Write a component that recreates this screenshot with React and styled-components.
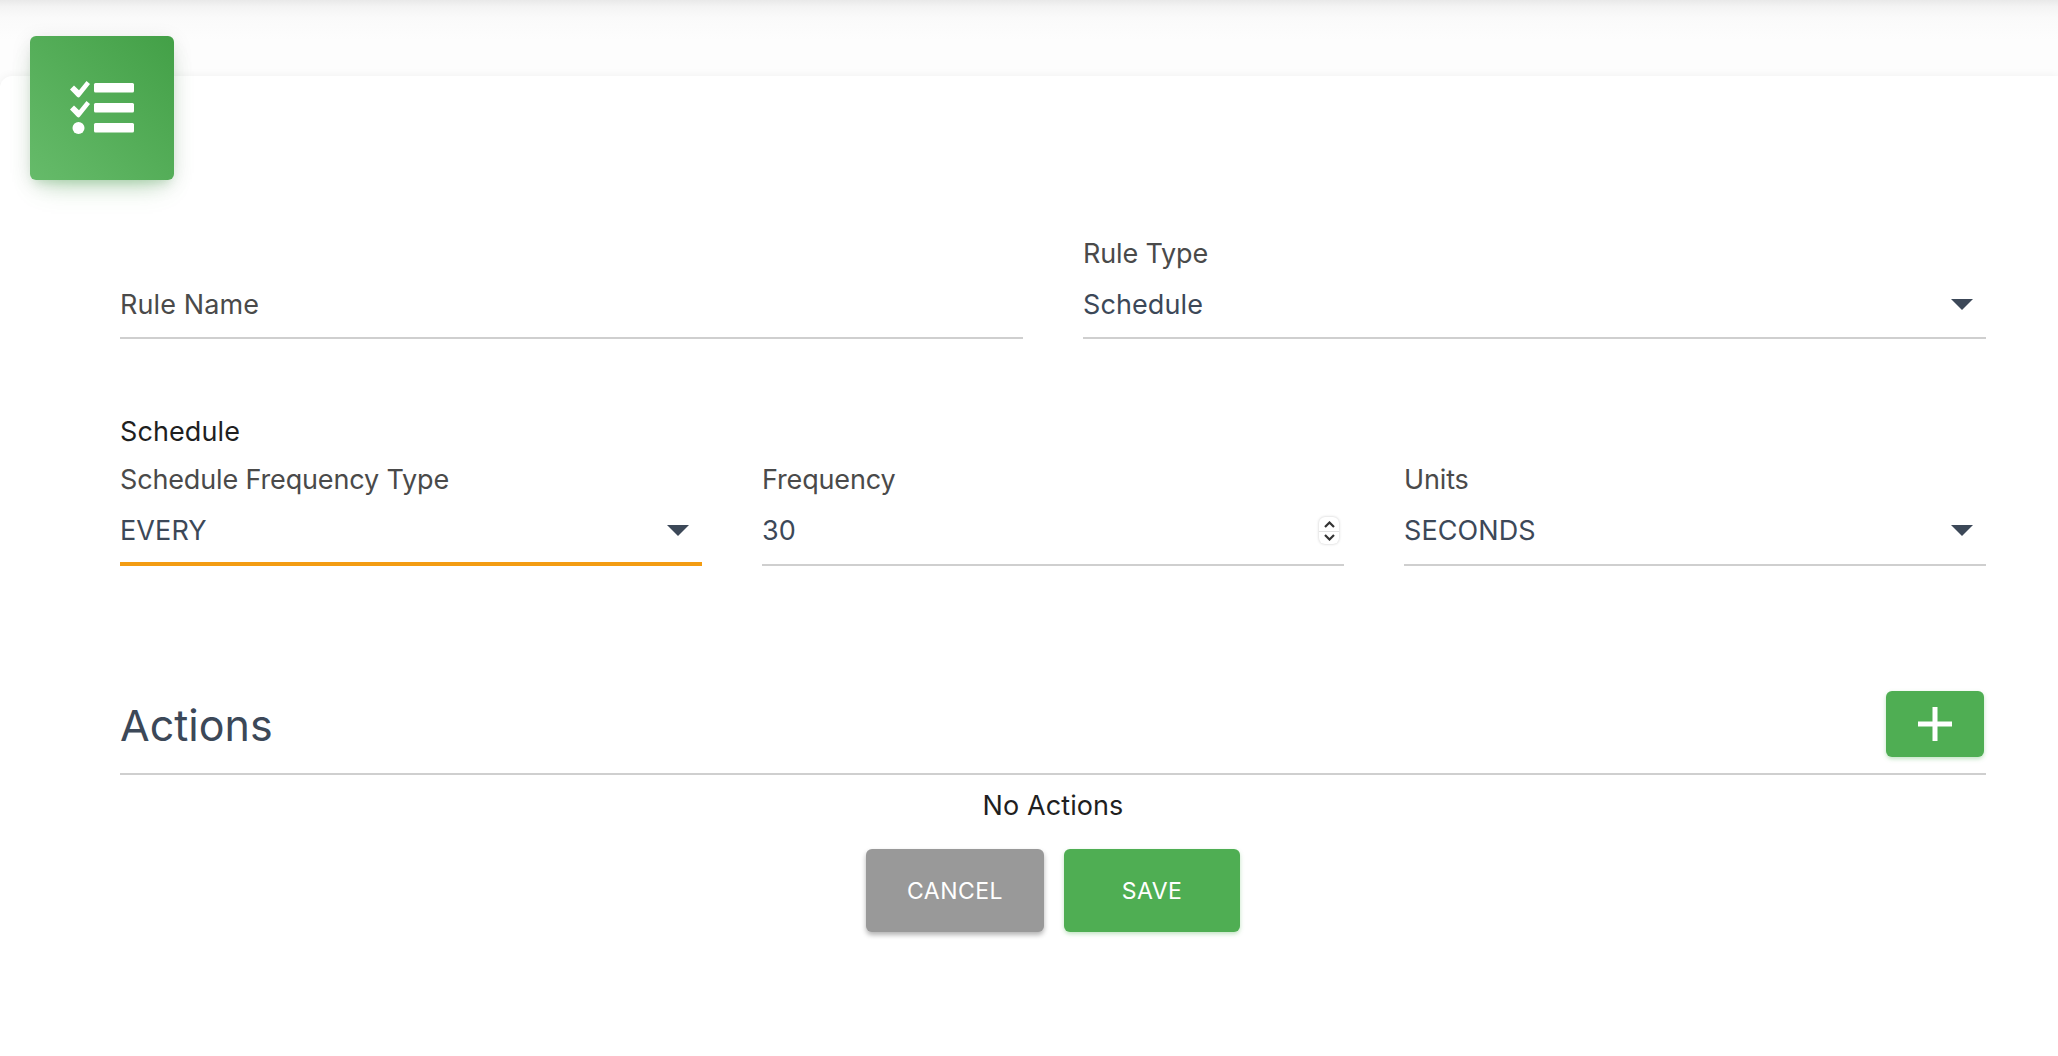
import React from "react";
import styled, { createGlobalStyle } from "styled-components";

const Global = createGlobalStyle`
  html, body { margin: 0; padding: 0; background: #fefefe; }
  body { font-family: Inter, "Liberation Sans", sans-serif; overflow: hidden; }
  * { box-sizing: border-box; }
`;

const Page = styled.div`
  height: 1056px;
  display: flex;
  flex-direction: column;
  overflow: hidden;
  background: #fdfdfd;
`;
const TopShade = styled.div`
  height: 76px;
  flex: none;
  background: linear-gradient(#e9e9e9 0, #f4f4f4 7px, #fafafa 18px, #fdfdfd 40px);
`;
const Card = styled.main`
  position: relative;
  flex: 1;
  background: #fff;
  border-top-left-radius: 12px;
  box-shadow: 0 0 10px rgba(0, 0, 0, 0.06);
  padding: 163px 72px 0 120px;
`;
const IconBadge = styled.div`
  position: absolute;
  left: 30px;
  top: -40px;
  width: 144px;
  height: 144px;
  border-radius: 6px;
  display: flex;
  align-items: center;
  justify-content: center;
  background: linear-gradient(45deg, #66bb6a, #43a047);
  box-shadow: 0 14px 26px -12px rgba(76, 175, 80, 0.42), 0 4px 20px 0 rgba(0, 0, 0, 0.1), 0 7px 10px -5px rgba(76, 175, 80, 0.2);
`;
const Row = styled.div`
  display: grid;
  grid-template-columns: repeat(${(p) => p.$cols}, 1fr);
  column-gap: 60px;
`;
const Field = styled.div`
  display: flex;
  flex-direction: column;
  justify-content: flex-end;
  min-width: 0;
`;
const FieldLabel = styled.label`
  font-size: 27px;
  letter-spacing: -0.15px;
  line-height: 30px;
  color: #4a4a4a;
  margin-bottom: ${(p) => (p.$tight ? "12px" : "13px")};
`;
const Control = styled.div`
  height: 58px;
  display: flex;
  align-items: center;
  justify-content: space-between;
  font-size: 27px;
  letter-spacing: 0.1px;
  color: ${(p) => (p.$placeholder ? "#4a4a4a" : "#3c4858")};
  border-bottom: ${(p) => (p.$focused ? "4px solid #f39c12" : "2px solid #cfcfcf")};
  padding-bottom: ${(p) => (p.$focused ? "9px" : p.$tight ? "9px" : "11px")};
`;
const Caret = styled.span`
  width: 0;
  height: 0;
  margin-right: 13px;
  border-left: 11px solid transparent;
  border-right: 11px solid transparent;
  border-top: 11px solid #3c4858;
`;
const Stepper = styled.span`
  width: 20px;
  height: 27px;
  margin-right: 5px;
  border-radius: 6px;
  background: #fff;
  box-shadow: 0 0 3px rgba(0, 0, 0, 0.22);
  display: flex;
  flex-direction: column;
  align-items: center;
  justify-content: space-between;
  padding: 4px 0 3px;
`;
const StepDivider = styled.span`
  align-self: stretch;
  height: 1px;
  background: #e2e2e2;
`;
const SectionLabel = styled.div`
  margin-top: 78px;
  font-size: 27px;
  letter-spacing: 0.1px;
  line-height: 30px;
  color: #1f1f1f;
  margin-bottom: 18px;
`;
const ActionsHeader = styled.div`
  margin-top: 125px;
  height: 84px;
  display: flex;
  align-items: flex-start;
  justify-content: space-between;
  border-bottom: 2px solid #cfcfcf;
`;
const ActionsTitle = styled.h2`
  margin: 9px 0 0;
  font-size: 43px;
  line-height: 50px;
  font-weight: 400;
  color: #3c4858;
`;
const AddButton = styled.button`
  width: 98px;
  height: 66px;
  margin-right: 2px;
  border: 0;
  border-radius: 6px;
  background: #4fae53;
  display: flex;
  align-items: center;
  justify-content: center;
  padding: 0;
  box-shadow: 0 2px 4px rgba(76, 175, 80, 0.35);
`;
const Empty = styled.p`
  margin: 16px 0 0;
  text-align: center;
  font-size: 27px;
  letter-spacing: 0.1px;
  line-height: 30px;
  color: #1f1f1f;
`;
const Buttons = styled.div`
  display: flex;
  justify-content: center;
  gap: 20px;
  margin-top: 28px;
`;
const Button = styled.button`
  width: ${(p) => p.$w}px;
  height: 83px;
  border: 0;
  border-radius: 6px;
  color: #fff;
  font: 400 23px Inter, "Liberation Sans", sans-serif;
  letter-spacing: 0.5px;
  background: ${(p) => (p.$primary ? "#4fae53" : "#999999")};
  box-shadow: ${(p) => (p.$primary ? "0 2px 4px rgba(76,175,80,.35)" : "0 3px 5px rgba(0,0,0,.3)")};
`;

const ChecklistIcon = () => (
  <svg width="66" height="54" viewBox="-1 1 66 54" fill="#fff" aria-hidden="true">
    <path d="M0 9.5l4-4 5 4.8L16.5 1 20 4 10 16.5a2 2 0 0 1-3 .2z" />
    <path d="M0 29.5l4-4 5 4.8L16.5 21 20 24 10 36.5a2 2 0 0 1-3 .2z" />
    <circle cx="8.5" cy="48" r="6" />
    <rect x="24" y="3" width="40" height="9.5" rx="1.5" />
    <rect x="24" y="23" width="40" height="9.5" rx="1.5" />
    <rect x="24" y="43" width="40" height="9.5" rx="1.5" />
  </svg>
);

const Chevron = ({ up }) => (
  <svg width="11" height="7" viewBox="0 0 11 7" fill="none" stroke="#333" strokeWidth="2.2" aria-hidden="true">
    <path d={up ? "M1 6l4.5-4.5L10 6" : "M1 1l4.5 4.5L10 1"} />
  </svg>
);

export default function App() {
  return (
    <Page>
      <Global />
      <TopShade />
      <Card>
        <IconBadge>
          <ChecklistIcon />
        </IconBadge>
        <Row $cols={2}>
          <Field>
            <Control $placeholder $tight>Rule Name</Control>
          </Field>
          <Field>
            <FieldLabel $tight>Rule Type</FieldLabel>
            <Control $tight>
              Schedule
              <Caret />
            </Control>
          </Field>
        </Row>
        <SectionLabel>Schedule</SectionLabel>
        <Row $cols={3}>
          <Field>
            <FieldLabel>Schedule Frequency Type</FieldLabel>
            <Control $focused>
              EVERY
              <Caret />
            </Control>
          </Field>
          <Field>
            <FieldLabel>Frequency</FieldLabel>
            <Control>
              30
              <Stepper>
                <Chevron up />
                <StepDivider />
                <Chevron />
              </Stepper>
            </Control>
          </Field>
          <Field>
            <FieldLabel>Units</FieldLabel>
            <Control>
              SECONDS
              <Caret />
            </Control>
          </Field>
        </Row>
        <ActionsHeader>
          <ActionsTitle>Actions</ActionsTitle>
          <AddButton aria-label="Add action">
            <svg width="34" height="34" viewBox="0 0 34 34" fill="#fff" aria-hidden="true">
              <rect x="14.5" y="0" width="5" height="34" />
              <rect x="0" y="14.5" width="34" height="5" />
            </svg>
          </AddButton>
        </ActionsHeader>
        <Empty>No Actions</Empty>
        <Buttons>
          <Button $w={178}>CANCEL</Button>
          <Button $w={176} $primary>SAVE</Button>
        </Buttons>
      </Card>
    </Page>
  );
}
